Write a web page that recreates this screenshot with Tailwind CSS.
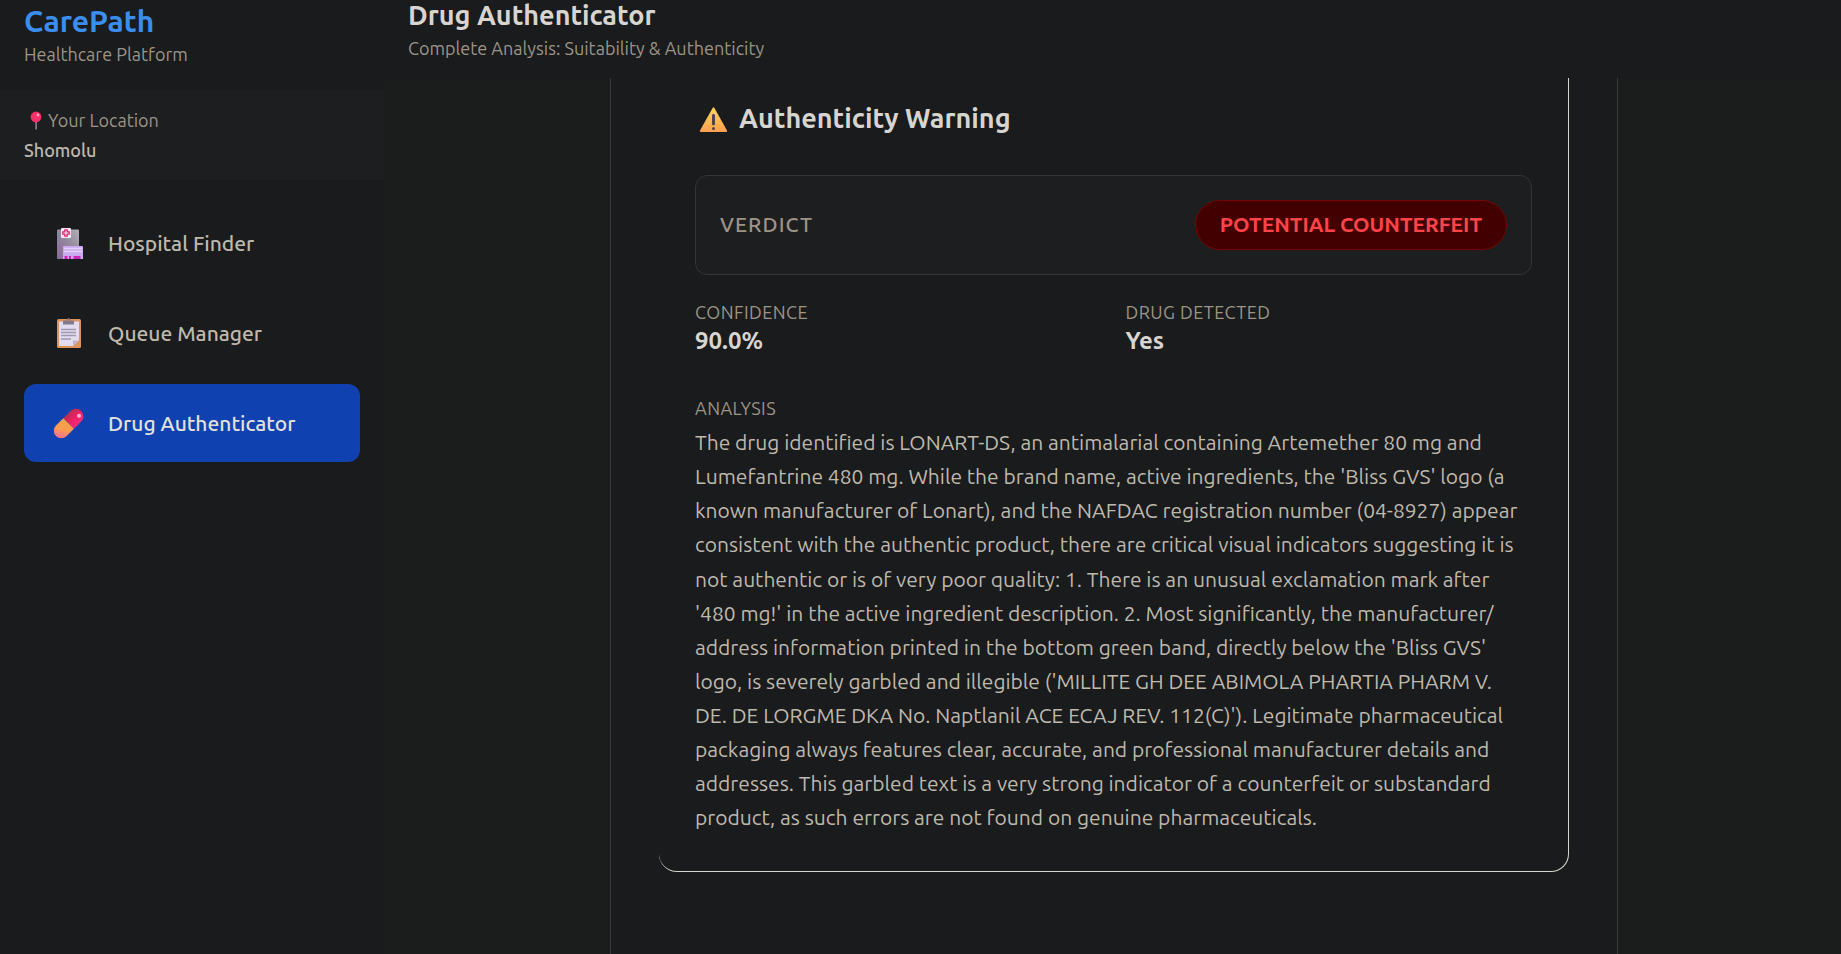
<!DOCTYPE html>
<html lang="en">
<head>
    <meta charset="UTF-8">
    <meta name="viewport" content="width=device-width, initial-scale=1.0">
    <title>CarePath - Drug Authenticator</title>
    <script src="https://cdn.jsdelivr.net/npm/@tailwindcss/browser@4"></script>
</head>
<body class="flex h-screen overflow-hidden bg-[#1b1d1c] font-[Ubuntu,'Noto_Sans',sans-serif] text-[#d8d4cf]">
    <!-- Sidebar -->
    <aside class="w-96 shrink-0 bg-[#191b1c]">
        <div class="h-[90px] px-6 pt-[3px]">
            <p class="text-[30px] leading-9 font-bold text-[#3b8eed]">CarePath</p>
            <p class="text-[18px] leading-[30px] text-[#9d9487]">Healthcare Platform</p>
        </div>

        <!-- Location -->
        <div class="bg-[#1c1e1f] px-6 py-[15px]">
            <p class="flex items-center text-[18px] leading-[30px] text-[#9d9487]">
                <svg class="h-6 w-6" viewBox="0 0 24 24" aria-hidden="true">
                    <rect x="11.5" y="13" width="1.2" height="8.5" fill="#b59fc4"/>
                    <circle cx="12" cy="9" r="5.4" fill="#f8316b"/>
                    <circle cx="14" cy="7" r="1.4" fill="#ffa3ba"/>
                </svg>
                Your Location
            </p>
            <p class="text-[18px] leading-[30px] font-medium text-[#bfb8ad]">Shomolu</p>
        </div>

        <!-- Navigation -->
        <nav class="flex flex-col gap-3 p-6">
            <a href="#" class="flex h-[78px] items-center gap-6 rounded-xl px-7 pt-0.5 text-[21px] font-medium text-[#bfb8ad]">
                <svg class="h-8 w-8" viewBox="0 0 32 32" aria-hidden="true">
                    <defs>
                        <linearGradient id="tower" x1="0" y1="1" x2="1" y2="0">
                            <stop offset="0" stop-color="#8a689f"/>
                            <stop offset=".55" stop-color="#948a9c"/>
                            <stop offset="1" stop-color="#b5afb8"/>
                        </linearGradient>
                    </defs>
                    <path d="M5 2.500q0-1 1-1h20q1 0 1 1V31H5z" fill="url(#tower)"/>
                    <rect x="9" y="0" width="10" height="10" rx="1" fill="#f1e6fa"/>
                    <path d="M12.800 1.800h2.400v2h2v2.400h-2v2h-2.400v-2h-2V3.800h2z" fill="none" stroke="#e8246a" stroke-width="1.300"/>
                    <path d="M11 19q0-1 1-1h18q1 0 1 1v12H11z" fill="#c9aaf0"/>
                    <path d="M12 20.500h18M12 23.500h18" stroke="#e2d0fb" stroke-width="1.500"/>
                    <path d="M12.500 28h3v3h-3zM17 28h2v3h-2zM21.500 28h7v3h-7z" fill="#cf25b5"/>
                </svg>
                Hospital Finder
            </a>
            <a href="#" class="flex h-[78px] items-center gap-6 rounded-xl px-7 pt-0.5 text-[21px] font-medium text-[#bfb8ad]">
                <svg class="h-8 w-8" viewBox="0 0 32 32" aria-hidden="true">
                    <rect x="5" y="1" width="24" height="29" rx="1.500" fill="#dd935a"/>
                    <path d="M7 3.500h20v19l-6 5.500H7z" fill="#e3dbf0"/>
                    <path d="M21 28v-5.500h6z" fill="#bfb3cc"/>
                    <path d="M11 6.500V3.500q0-1 1-1h2.500Q15 0 16.500 0T18.500 2.500H21q1 0 1 1v3z" fill="#857a8a"/>
                    <circle cx="16.500" cy="2.300" r=".9" fill="#d98b51"/>
                    <path d="M9 11.500h15M9 14.500h15M9 17.500h15M9 21h10" stroke="#a197b0" stroke-width="1.300"/>
                </svg>
                Queue Manager
            </a>
            <a href="#" aria-current="page" class="flex h-[78px] items-center gap-6 rounded-xl bg-[#0f42b0] px-7 pt-0.5 text-[21px] font-medium text-[#e3e1dd]">
                <svg class="h-8 w-8" viewBox="0 0 32 32" aria-hidden="true">
                    <defs>
                        <linearGradient id="capTop" x1="0" y1="0" x2="0" y2="1">
                            <stop offset="0" stop-color="#b9304f"/>
                            <stop offset=".5" stop-color="#ee1f66"/>
                            <stop offset="1" stop-color="#f02c7c"/>
                        </linearGradient>
                        <linearGradient id="capBottom" x1="1" y1="0" x2="0" y2=".4">
                            <stop offset="0" stop-color="#f0a345"/>
                            <stop offset=".6" stop-color="#ff9a52"/>
                            <stop offset="1" stop-color="#f9748c"/>
                        </linearGradient>
                    </defs>
                    <g transform="translate(16.600 15.500) rotate(-45)">
                        <path d="M0-7.500h10.300a7.500 7.500 0 0 1 0 15H0z" fill="url(#capTop)"/>
                        <path d="M0-7.500h-10.300a7.500 7.500 0 0 0 0 15H0z" fill="url(#capBottom)"/>
                    </g>
                    <circle cx="27" cy="7.700" r="2" fill="#ffb3cb"/>
                </svg>
                Drug Authenticator
            </a>
        </nav>
    </aside>

    <div class="flex min-w-0 flex-1 flex-col">
        <!-- Page Header -->
        <header class="h-[78px] shrink-0 bg-[#191b1c] px-6">
            <h1 class="text-[27px] leading-[30px] font-bold">Drug Authenticator</h1>
            <p class="text-[18px] leading-9 text-[#9d9487]">Complete Analysis: Suitability &amp; Authenticity</p>
        </header>

        <!-- Results -->
        <main class="flex flex-1 justify-center overflow-hidden pl-[3px]">
            <div class="w-full max-w-[1008px] border-x border-[#363a3c] bg-[#191b1c] px-12">
                <section class="rounded-b-[18px] border-r border-b border-[#d8d4cf] px-9 pb-9">
                    <h2 class="flex items-center gap-2 pt-5 text-[27px] leading-10 font-bold">
                        <svg class="h-9 w-9" viewBox="0 0 36 36" aria-hidden="true">
                            <defs>
                                <linearGradient id="warn" x1="0" y1="0" x2="0" y2="1">
                                    <stop offset="0" stop-color="#fdd657"/>
                                    <stop offset="1" stop-color="#fd9f50"/>
                                </linearGradient>
                            </defs>
                            <path d="M17.600 8q.9-1.400 1.800 0L32 30.500q.4 1.500-1 1.500H6q-1.400 0-1-1.500z" fill="url(#warn)"/>
                            <rect x="17" y="14" width="3" height="11.500" rx="1.400" fill="#4d4450"/>
                            <circle cx="18.500" cy="28.400" r="1.500" fill="#4d4450"/>
                        </svg>
                        Authenticity Warning
                    </h2>

                    <div class="mt-[37px] flex h-[100px] items-center justify-between rounded-xl border border-[#333638] bg-[#1c1e1f] px-6">
                        <span class="text-[21px] font-medium tracking-wider text-[#9d9487]">VERDICT</span>
                        <span class="flex h-[50px] items-center rounded-full border border-[#780505] bg-[#430000] px-6 text-[21px] font-bold text-[#ff4449]">POTENTIAL COUNTERFEIT</span>
                    </div>

                    <dl class="mt-6 grid grid-cols-2 gap-x-6">
                        <div>
                            <dt class="text-[18px] leading-[26px] tracking-wide text-[#9d9487]">CONFIDENCE</dt>
                            <dd class="text-[24px] leading-8 font-semibold">90.0%</dd>
                        </div>
                        <div>
                            <dt class="text-[18px] leading-[26px] tracking-wide text-[#9d9487]">DRUG DETECTED</dt>
                            <dd class="text-[24px] leading-8 font-semibold">Yes</dd>
                        </div>
                    </dl>

                    <h3 class="mt-9 text-[18px] leading-[30px] tracking-wide text-[#9d9487]">ANALYSIS</h3>
                    <p class="mt-0.5 text-[21px] leading-relaxed text-[#bfb8ad]">
                        The drug identified is LONART-DS, an antimalarial containing Artemether 80 mg and
                        Lumefantrine 480 mg. While the brand name, active ingredients, the 'Bliss GVS' logo (a
                        known manufacturer of Lonart), and the NAFDAC registration number (04-8927) appear
                        consistent with the authentic product, there are critical visual indicators suggesting it is
                        not authentic or is of very poor quality: 1. There is an unusual exclamation mark after
                        '480 mg!' in the active ingredient description. 2. Most significantly, the manufacturer/<wbr>address
                        information printed in the bottom green band, directly below the 'Bliss GVS'
                        logo, is severely garbled and illegible ('MILLITE GH DEE ABIMOLA PHARTIA PHARM V.<br>
                        DE. DE LORGME DKA No. Naptlanil ACE ECAJ REV. 112(C)'). Legitimate pharmaceutical
                        packaging always features clear, accurate, and professional manufacturer details and
                        addresses. This garbled text is a very strong indicator of a counterfeit or substandard
                        product, as such errors are not found on genuine pharmaceuticals.
                    </p>
                </section>
            </div>
        </main>
    </div>
</body>
</html>
